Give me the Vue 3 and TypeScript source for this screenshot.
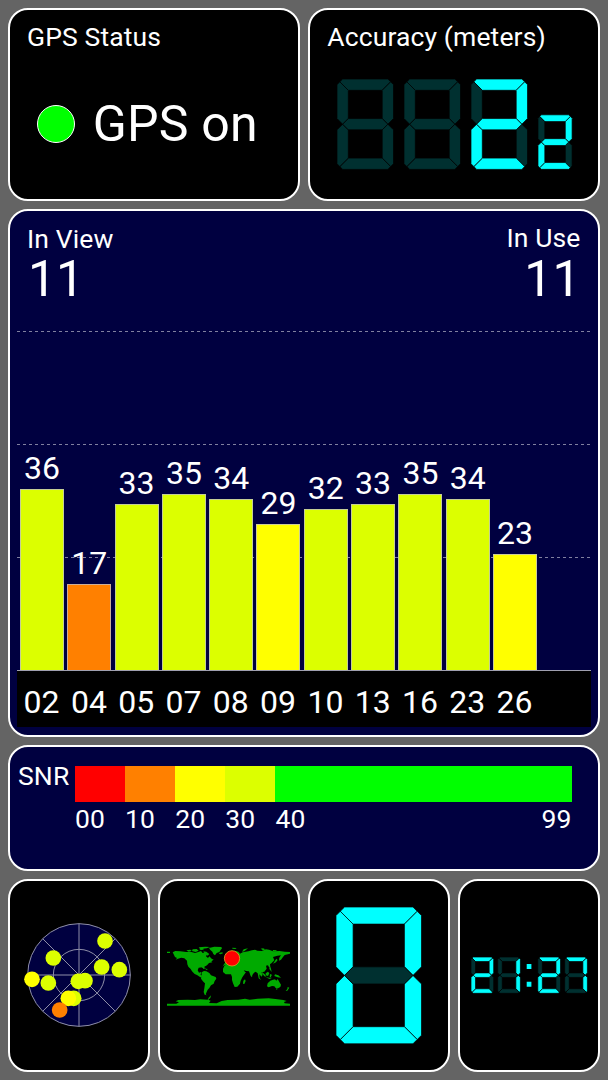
<script setup lang="ts">
interface Satellite {
  id: string
  snr: number
}

interface Dot {
  x: number
  y: number
  color: string
}

interface Digit {
  x: number
  y: number
  scale: number
  value: number
}

const RED = '#ff0000'
const ORANGE = '#ff8000'
const YELLOW = '#ffff00'
const LIME = '#dcff00'
const GREEN = '#00ff00'

const satellites: Satellite[] = [
  { id: '02', snr: 36 },
  { id: '04', snr: 17 },
  { id: '05', snr: 33 },
  { id: '07', snr: 35 },
  { id: '08', snr: 34 },
  { id: '09', snr: 29 },
  { id: '10', snr: 32 },
  { id: '13', snr: 33 },
  { id: '16', snr: 35 },
  { id: '23', snr: 34 },
  { id: '26', snr: 23 },
]

function snrColor(snr: number): string {
  if (snr < 10) return RED
  if (snr < 20) return ORANGE
  if (snr < 30) return YELLOW
  if (snr < 40) return LIME
  return GREEN
}

const PX_PER_SNR = 5.01

const scaleSteps = [
  { label: '00', color: RED },
  { label: '10', color: ORANGE },
  { label: '20', color: YELLOW },
  { label: '30', color: LIME },
]

const dots: Dot[] = [
  { x: 78, y: -102, color: LIME },
  { x: -77, y: -51, color: LIME },
  { x: 68, y: -24, color: LIME },
  { x: 121, y: -16, color: LIME },
  { x: -92, y: 24, color: LIME },
  { x: -141, y: 13, color: YELLOW },
  { x: 18, y: 17, color: LIME },
  { x: -2, y: 19, color: LIME },
  { x: -16, y: 70, color: LIME },
  { x: -32, y: 70, color: YELLOW },
  { x: -58, y: 105, color: ORANGE },
]

// Seven segments on a 5 x 8 grid, in the order a b c d e f g
const segments: string[] = [
  '0.5,0 4.5,0 4.75,0.25 4,1 1,1 0.25,0.25',
  '4.75,0.25 5,0.5 5,3.5 4.5,4 4,3.5 4,1',
  '4.5,4 5,4.5 5,7.5 4.75,7.75 4,7 4,4.5',
  '1,7 4,7 4.75,7.75 4.5,8 0.5,8 0.25,7.75',
  '0.5,4 1,4.5 1,7 0.25,7.75 0,7.5 0,4.5',
  '0.25,0.25 1,1 1,3.5 0.5,4 0,3.5 0,0.5',
  '0.5,4 1,3.5 4,3.5 4.5,4 4,4.5 1,4.5',
]

const lit: Record<number, string> = {
  0: '1111110',
  1: '0110000',
  2: '1101101',
  7: '1110000',
  [-1]: '0000000',
}

const accuracy: Digit[] = [
  { x: 0, y: 0, scale: 11.3, value: -1 },
  { x: 67, y: 0, scale: 11.3, value: -1 },
  { x: 134, y: 0, scale: 11.3, value: 2 },
  { x: 201, y: 35.8, scale: 6.82, value: 2 },
]
const speed: Digit[] = [{ x: 0, y: 0, scale: 17.1, value: 0 }]
const clock: Digit[] = [
  { x: 0, y: 0, scale: 4.54, value: 2 },
  { x: 26.7, y: 0, scale: 4.54, value: 1 },
  { x: 66.8, y: 0, scale: 4.54, value: 2 },
  { x: 93.7, y: 0, scale: 4.54, value: 7 },
]

function segClass(value: number, i: number): string {
  return lit[value][i] === '1' ? 'on' : 'off'
}
</script>

<template>
  <main class="screen">
    <div class="row top">
      <section class="panel">
        <h2 class="title">GPS Status</h2>
        <div class="status">
          <span class="lamp"></span>
          <span class="big">GPS on</span>
        </div>
      </section>
      <section class="panel">
        <h2 class="title">Accuracy (meters)</h2>
        <svg class="accuracy seg" width="236" height="91" viewBox="0 0 236 91">
          <g v-for="(d, k) in accuracy" :key="k" :transform="`translate(${d.x} ${d.y}) scale(${d.scale})`">
            <polygon v-for="(p, i) in segments" :key="i" :points="p" :class="segClass(d.value, i)" />
          </g>
        </svg>
      </section>
    </div>

    <section class="panel navy chart">
      <div class="counts">
        <div class="left">
          <h2 class="title">In View</h2>
          <div class="big">11</div>
        </div>
        <div class="right">
          <h2 class="title">In Use</h2>
          <div class="big">11</div>
        </div>
      </div>
      <div class="plot">
        <svg class="lines" width="573" height="340">
          <line v-for="y in [0.5, 113.5, 226.5]" :key="y" x1="0" x2="573" :y1="y" :y2="y" />
        </svg>
        <div v-for="s in satellites" :key="s.id" class="col">
          <span class="num">{{ s.snr }}</span>
          <div class="bar" :style="{ height: s.snr * PX_PER_SNR + 'px', background: snrColor(s.snr) }"></div>
        </div>
      </div>
      <div class="ids">
        <span v-for="s in satellites" :key="s.id">{{ s.id }}</span>
      </div>
    </section>

    <section class="panel navy legend">
      <span class="title">SNR</span>
      <div class="scale">
        <div v-for="s in scaleSteps" :key="s.label" class="step">
          <div class="swatch" :style="{ background: s.color }"></div>
          <span class="title">{{ s.label }}</span>
        </div>
        <div class="step last">
          <div class="swatch green"></div>
          <div class="ends">
            <span class="title">40</span>
            <span class="title">99</span>
          </div>
        </div>
      </div>
    </section>

    <div class="row bottom">
      <section class="panel tile">
        <svg class="radar" width="112" height="112" viewBox="-168 -168 336 336">
          <circle r="154" class="sky" />
          <circle r="77" class="ring" />
          <path class="ring" d="M-154 0H154M0-154V154M-109-109 109 109M109-109-109 109" />
          <circle v-for="(d, i) in dots" :key="i" :cx="d.x" :cy="d.y" r="23.5" :fill="d.color" />
        </svg>
      </section>
      <section class="panel tile">
        <svg class="map" width="123" height="62" viewBox="36 46 369 186">
          <g class="land">
            <path d="M36 66h9v4h-9zM53 68l8-4 15 1 18 2 12-1 14 4 10-3 8-3 5 6 8-2 6 5-4 7 6 5 4-5 7 7 6 3-7 5 3 3-10 2-6 7-8 4-2 8-4-6-11 1-3 8 4 7 6-2 1 4-3 3 5 4-1 5 8 2-4 1-9-4-9-6-7-3-8-8-4-7-7-7-3-7-1-11-8-7-9-2-10 3-7 3 4-5-6-3z" />
            <path d="M94 62l12-2 4 3-9 3zM113 59l12-1 6 5-9 4-11-3zM132 57l9-2 5 3-8 4zM131 53l20-2 14 1-10 4-11 1 2 5-8-3zM145 65l9 1 9 7-5 5-3-3-5-1zM162 55l16-4 21 1 2 4-4 5-4 6-8 3-5 7-5-4-3-7-6-5zM194 69l8-1 2 3-7 3-5-2z" />
            <path d="M140 128l7-4 7 1 9 5 5 7 14 5 2 5-5 7-3 8-8 5-5 8-5 5-4 9-2 5 3 3-6-2-3-8 2-11 2-15-5-5-7-9 2-10zM136 110l8 1 9 5-6 1zM151 117l8 1-5 3z" />
            <path d="M208 108l-4 10v9l8 7h16l3 8v9l3 10 5 11 8-1 8-9 2-9 5-10 11-16-8 1-5-9-6-13-10 2-10-4-2-4-13 2zM265 153l5-4 2 5-4 9-4-1z" />
            <path d="M211 98l7-10 4-7 7-6 4-7 10-4 8 3 4 5 8-4 17-3 11-3 9-2 7 3 13 1 13-5 9 1 12 5 20-1 15 2 17 1v5l-17 4-5 6-6 8-6 3 1-9 5-7-11 1-13 4 4 10-9 9-4 3 1 8-4 1-3-6-6 1 2 9-7 9-4 1-5 1 4 7-3 6-7-7 1 10 4 7-7-5-3-15-6-5-5 3-5 7-1 7-4-4-5-14-8-1-8-2 5 6-9 8-9 3-9-16-4-8-11 1-1-5-6 1-1 4-4-4-6-7-7 4-5 7z" />
            <path d="M210 86l6-4 3-7 4 3-1 9-7 3zM232 54l13 1-4 3-9-1zM261 66l5-7 13-3-11 9zM317 57l7-1 7 3-7 3zM354 61l12 1-4 3h-9zM364 87l4 4-5 7-9 4 4-6zM343 112l4 1 3 14-7-9zM320 126l9 8 5 7-6-1-7-9zM332 131l7-5 4 5-4 8-7-2zM345 133l7 3-4 3 1 5-5-3zM360 134l10 3 8 7-10-1-10-4zM332 143l18 2-6 3z" />
            <path d="M338 161l8-8 8-3 6-1 4 4 4-5 5 9 5 8-2 7-7 4-7-1-4-5-7-1-10 4-5-3zM363 176l5 1-3 4zM398 172l5 2-6 9-5 1 5-6z" />
            <path d="M36 222h28l8-4-10-3 8-4 28-1 22 1 16-2 22 1 3-6 7-7-2 8-6 5 7 3-5 7 23 1 15-7 18-3 32-1 20-3 14 3 24-3 33-1 20 2 24 3 10 3-8 3 2 4 18 1v6H36z" />
          </g>
          <circle cx="231" cy="86" r="23" class="here" />
        </svg>
      </section>
      <section class="panel tile">
        <svg class="seg speed" width="86" height="138" viewBox="0 0 86 138">
          <g v-for="(d, k) in speed" :key="k" :transform="`translate(${d.x} ${d.y}) scale(${d.scale})`">
            <polygon v-for="(p, i) in segments" :key="i" :points="p" :class="segClass(d.value, i)" />
          </g>
        </svg>
      </section>
      <section class="panel tile">
        <svg class="seg" width="117" height="37" viewBox="0 0 117 37">
          <g v-for="(d, k) in clock" :key="k" :transform="`translate(${d.x} ${d.y}) scale(${d.scale})`">
            <polygon v-for="(p, i) in segments" :key="i" :points="p" :class="segClass(d.value, i)" />
          </g>
          <path class="colon" d="M55.7 7h4.7v5h-4.7zM55.7 24.7h4.7v5h-4.7z" />
        </svg>
      </section>
    </div>
  </main>
</template>

<style>
body {
  margin: 0;
  background: #646464;
}
</style>

<style scoped>
.screen {
  box-sizing: border-box;
  width: 608px;
  height: 1080px;
  padding: 8px;
  display: grid;
  grid-template-rows: 193px 528px 126px 193px;
  gap: 8px;
  background: #646464;
  color: #fff;
  font-family: Roboto, "Liberation Sans", sans-serif;
}
.row {
  display: grid;
  gap: 8.6px;
}
.top {
  grid-template-columns: 1fr 1fr;
}
.bottom {
  grid-template-columns: repeat(4, 1fr);
}
.panel {
  box-sizing: border-box;
  min-width: 0;
  border: 2px solid #fff;
  border-radius: 20px;
  background: #000;
  overflow: hidden;
}
.navy {
  background: #000040;
}
.title {
  margin: 0;
  font-size: 26.5px;
  font-weight: 400;
  line-height: 30px;
  letter-spacing: 0.12px;
  white-space: nowrap;
}
.top .title {
  padding: 12px 0 0 17px;
}
.big {
  font-size: 50px;
  line-height: 50px;
  white-space: nowrap;
}
.status {
  display: flex;
  align-items: center;
  gap: 18px;
  margin: 47px 0 0 26.7px;
}
.status .big {
  letter-spacing: 0.2px;
}
.lamp {
  box-sizing: border-box;
  width: 38px;
  height: 38px;
  border: 1px solid #fff;
  border-radius: 50%;
  background: #00ff00;
}
svg {
  display: block;
}
.accuracy {
  margin: 26.7px 0 0 26.7px;
}
.seg polygon {
  stroke: #000;
  stroke-width: 0.7px;
  vector-effect: non-scaling-stroke;
}
.on,
.colon {
  fill: #00ffff;
}
.off {
  fill: #003030;
}
.chart {
  display: flex;
  flex-direction: column;
  padding: 13px 7.5px 8.5px 7px;
}
.counts {
  display: flex;
  justify-content: space-between;
  padding: 0 10px;
}
.left .big {
  padding-left: 1px;
}
.right {
  display: flex;
  flex-direction: column;
  align-items: flex-end;
}
.right .title {
  line-height: 28px;
  padding-bottom: 2px;
}
.plot {
  position: relative;
  flex: 1;
  display: flex;
  align-items: flex-end;
  gap: 3.3px;
  padding-left: 3px;
  border-bottom: 1px solid #9f9fb0;
}
.lines {
  position: absolute;
  left: 0;
  bottom: -1px;
}
.lines line {
  stroke: #8080a0;
  stroke-width: 1;
  stroke-dasharray: 3 3;
}
.col {
  position: relative;
  width: 44px;
  display: flex;
  flex-direction: column;
  align-items: center;
}
.num {
  font-size: 32px;
  line-height: 32px;
  margin-bottom: 5px;
}
.bar {
  box-sizing: border-box;
  width: 100%;
  border: 1px solid rgba(190, 190, 200, 0.75);
  border-bottom: 0;
}
.ids {
  display: flex;
  gap: 3.3px;
  height: 56px;
  padding-left: 2.6px;
  background: #000;
  font-size: 32px;
  line-height: 63px;
}
.ids span {
  width: 44px;
  text-align: center;
}
.legend {
  display: flex;
  padding: 14px 0 0 8px;
}
.legend > .title {
  width: 51px;
}
.scale {
  display: flex;
  width: 496.5px;
  margin: 5px 0 0 6px;
}
.step {
  width: 50.1px;
}
.last {
  flex: 1;
}
.swatch {
  height: 35.5px;
  margin-bottom: 2.5px;
}
.green {
  background: #00ff00;
}
.ends {
  display: flex;
  justify-content: space-between;
}
.tile {
  display: grid;
  place-items: center;
}
.sky {
  fill: #000040;
  stroke: #8f8fa8;
  stroke-width: 3;
}
.ring {
  fill: none;
  stroke: #8f8fa8;
  stroke-width: 3;
}
.radar {
  margin-bottom: 1px;
}
.map {
  margin-top: 1px;
}
.land {
  fill: #00aa00;
}
.here {
  fill: #ff0000;
  stroke: #e0a020;
  stroke-width: 2.5;
}
</style>
